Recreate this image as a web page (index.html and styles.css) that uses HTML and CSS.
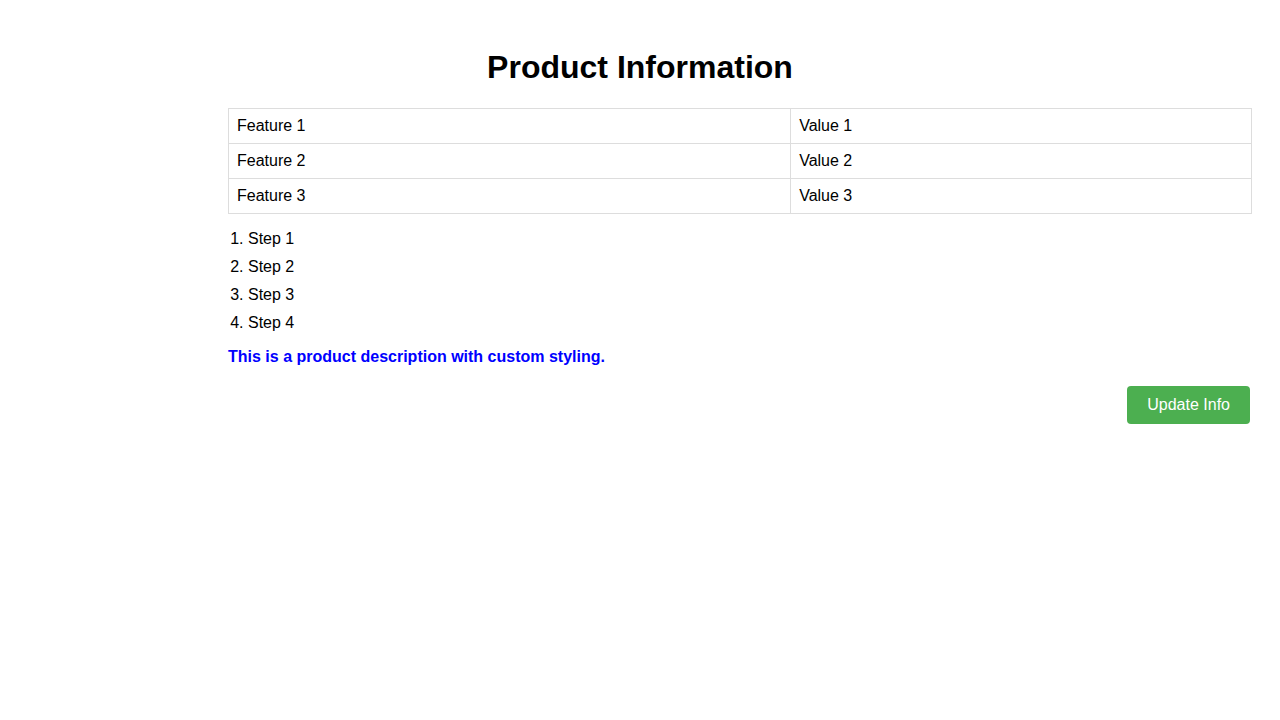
FILE: index.html
```html
<!DOCTYPE html>
<html>
<head>
<meta charset="utf-8">
<link rel="stylesheet" href="styles.css">
</head>
<body>
<h1 class="title">Product Information</h1>
<div class="content">
  <table class="info-table">
    <tr><td>Feature 1</td><td>Value 1</td></tr>
    <tr><td>Feature 2</td><td>Value 2</td></tr>
    <tr><td>Feature 3</td><td>Value 3</td></tr>
  </table>
  <ol class="steps">
    <li>Step 1</li>
    <li>Step 2</li>
    <li>Step 3</li>
    <li>Step 4</li>
  </ol>
  <p class="description">This is a product description with custom styling.</p>
  <div class="actions">
    <button class="update-btn">Update Info</button>
  </div>
</div>
</body>
</html>
```
FILE: styles.css
```css
body {
  margin: 8px;
  padding: 20px;
  font-family: "Liberation Sans", Arial, sans-serif;
  font-size: 16px;
  color: #000;
  background: #fff;
}
.title {
  text-align: center;
  font-size: 32px;
  font-weight: bold;
  margin: 21.44px 0;
  line-height: 37px;
}
.content {
  margin-left: 200px;
}
.info-table {
  width: 100%;
  border-collapse: collapse;
}
.info-table td {
  border: 1px solid #ddd;
  padding: 8px;
  line-height: 18px;
}
.steps {
  margin: 16px 0;
  padding-left: 20px;
}
.steps li {
  line-height: 18px;
  margin-bottom: 10px;
}
.description {
  color: #0000ff;
  font-weight: bold;
  margin: 16px 0;
  line-height: 18px;
}
.actions {
  display: flex;
  justify-content: flex-end;
  margin-top: 20px;
  padding-right: 2px;
}
.update-btn {
  background: #4caf50;
  color: #fff;
  border: none;
  border-radius: 4px;
  padding: 10px 20px;
  font-family: "Liberation Sans", Arial, sans-serif;
  font-size: 16px;
  line-height: 18px;
  cursor: pointer;
}
```
